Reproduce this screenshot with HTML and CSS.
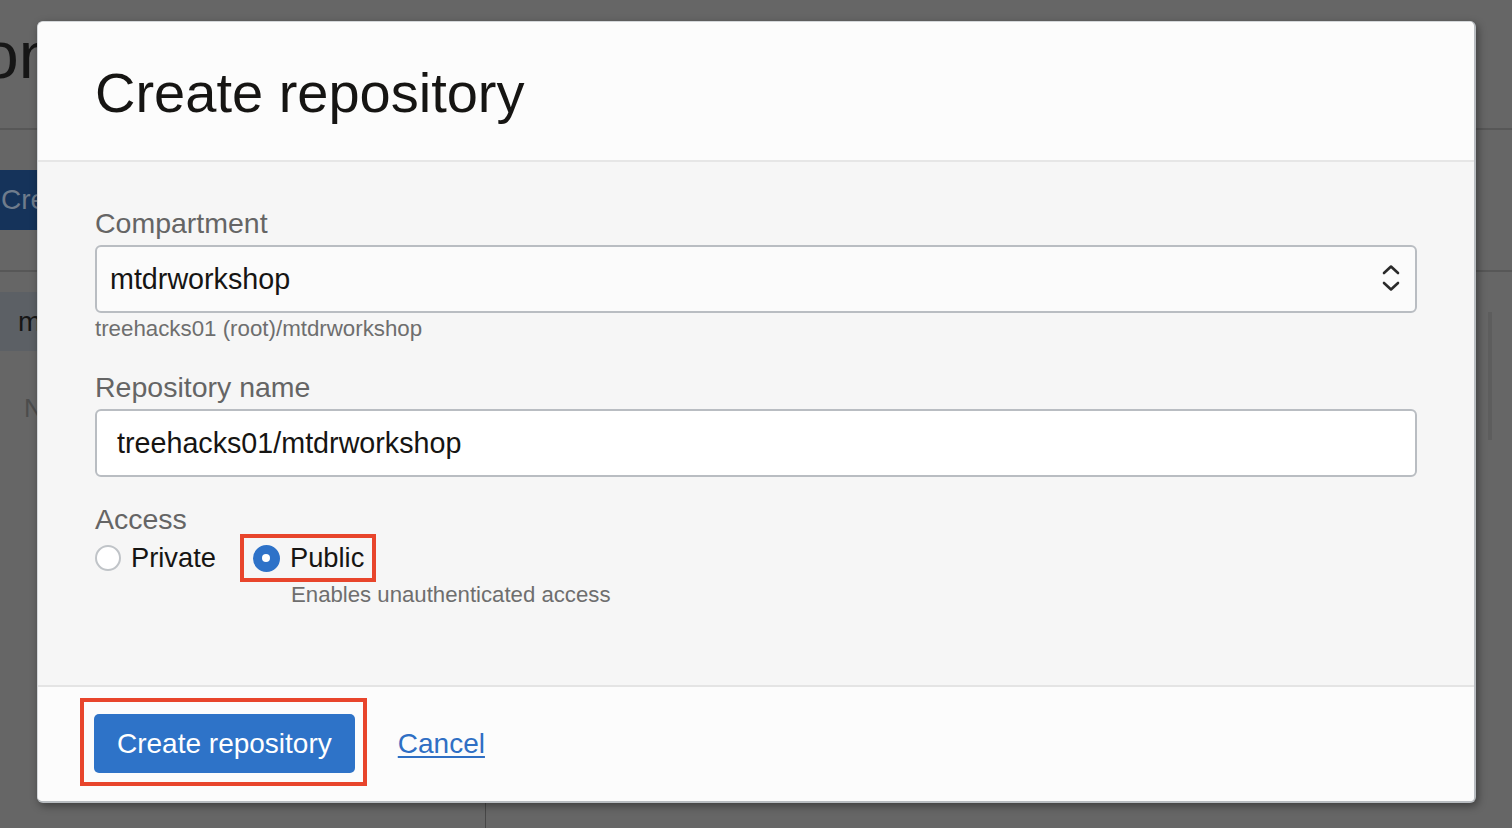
FILE: index.html
```html
<!DOCTYPE html>
<html lang="en">
<head>
<meta charset="utf-8">
<title>Create repository</title>
<link rel="stylesheet" href="styles.css">
</head>
<body>
<div class="page">
  <header class="page-head"><h1 class="page-title">on</h1></header>
  <div class="page-toolbar"><button class="page-btn" type="button">Cre</button></div>
  <div class="page-list">
    <div class="page-row">m</div>
    <div class="page-empty">N</div>
  </div>
  <div class="page-bottom"><div class="page-col"></div></div>
  <div class="page-scroll"></div>
</div>

<div class="modal" role="dialog" aria-labelledby="dlg-title">
  <div class="modal-header">
    <h2 class="modal-title" id="dlg-title">Create repository</h2>
  </div>
  <div class="modal-body">
    <div class="field">
      <label class="field-label">Compartment</label>
      <div class="select">
        <span class="value">mtdrworkshop</span>
        <svg class="chevrons" width="18" height="30" viewBox="0 0 18 30" aria-hidden="true">
          <path d="M2 9 L9 2.5 L16 9" fill="none" stroke="#2a2a2a" stroke-width="2.6" stroke-linecap="round" stroke-linejoin="round"/>
          <path d="M2 19 L9 25.5 L16 19" fill="none" stroke="#2a2a2a" stroke-width="2.6" stroke-linecap="round" stroke-linejoin="round"/>
        </svg>
      </div>
      <div class="helper">treehacks01 (root)/mtdrworkshop</div>
    </div>
    <div class="field">
      <label class="field-label">Repository name</label>
      <div class="input"><span class="value">treehacks01/mtdrworkshop</span></div>
    </div>
    <div class="field field-access">
      <label class="field-label access-label">Access</label>
      <div class="radio-group">
        <div class="radio-option">
          <span class="radio"></span>
          <span>Private</span>
        </div>
        <div class="radio-option public">
          <span class="radio checked"><span class="dot"></span></span>
          <span>Public</span>
        </div>
      </div>
      <div class="helper access-helper">Enables unauthenticated access</div>
    </div>
  </div>
  <div class="modal-footer">
    <div class="annot">
      <button class="btn-primary" type="button">Create repository</button>
    </div>
    <a class="cancel" href="#">Cancel</a>
  </div>
</div>
</body>
</html>
```

FILE: styles.css
```css
* {
  box-sizing: border-box;
}

html, body {
  margin: 0;
  padding: 0;
}

body {
  width: 1512px;
  height: 828px;
  overflow: hidden;
  position: relative;
  background: #666666;
  font-family: "Liberation Sans", Arial, Helvetica, sans-serif;
}

/* ---------- background page (dimmed) ---------- */
.page {
  height: 828px;
  display: flex;
  flex-direction: column;
}

.page-head {
  height: 130px;
  padding-top: 22px;
  border-bottom: 2px solid #575757;
  overflow: hidden;
}

.page-title {
  margin: 0 0 0 -18px;
  font-size: 66px;
  line-height: 66px;
  font-weight: 400;
  color: #161616;
  white-space: nowrap;
}

.page-toolbar {
  height: 142px;
  padding-top: 40px;
  border-bottom: 2px solid #575757;
}

.page-btn {
  display: block;
  width: 90px;
  height: 60px;
  border: none;
  border-radius: 0;
  background: #15335a;
  color: #6f7c8c;
  font-family: inherit;
  font-size: 28px;
  text-align: left;
  padding: 0 0 0 1px;
}

.page-list {
  flex: 1;
  padding-top: 20px;
}

.page-row {
  width: 420px;
  height: 59px;
  background: #5c6065;
  color: #161616;
  font-size: 28px;
  line-height: 59px;
  padding-left: 18px;
}

.page-empty {
  margin-top: 42px;
  padding-left: 24px;
  font-size: 26px;
  line-height: 30px;
  color: #4c4c4c;
}

.page-bottom {
  height: 25px;
}

.page-col {
  width: 486px;
  height: 100%;
  border-right: 1px solid #474747;
}

.page-scroll {
  position: absolute;
  top: 312px;
  right: 20px;
  width: 4px;
  height: 128px;
  background: #5d5d5d;
}

/* ---------- modal ---------- */
.modal {
  position: absolute;
  left: 37px;
  top: 21px;
  width: 1439px;
  height: 782px;
  display: flex;
  flex-direction: column;
  background: #fcfcfc;
  border: 1px solid #d4d7da;
  border-right: 2px solid #b8bcc0;
  border-bottom: 2px solid #b8bcc0;
  border-radius: 6px;
  overflow: hidden;
  box-shadow: 2px 3px 8px rgba(0, 0, 0, 0.4);
}

.modal-header {
  height: 140px;
  flex: none;
  padding: 39px 57px 0;
  background: #fcfcfc;
  border-bottom: 2px solid #e6e6e6;
}

.modal-title {
  margin: 0;
  font-size: 56px;
  line-height: 64px;
  font-weight: 400;
  color: #161513;
}

.modal-body {
  flex: 1;
  background: #f6f6f6;
  padding: 44px 57px 0;
}

.field + .field {
  margin-top: 28px;
}

.field.field-access {
  margin-top: 25px;
}

.field-label {
  display: block;
  font-size: 28.5px;
  line-height: 34px;
  color: #656565;
  margin-bottom: 5px;
}

.field-label.access-label {
  margin-bottom: 0;
}

.select,
.input {
  height: 68px;
  border: 2px solid #b9bdc2;
  border-radius: 6px;
  display: flex;
  align-items: center;
}

.select {
  background: #fbfbfb;
  justify-content: space-between;
  padding: 0 15px 0 13px;
}

.input {
  background: #ffffff;
  padding: 0 20px;
}

.value {
  font-size: 28.7px;
  color: #161513;
}

.chevrons {
  display: block;
}

.helper {
  font-size: 22.3px;
  line-height: 26px;
  color: #6e6e6e;
  margin-top: 3px;
}

.radio-group {
  height: 44px;
  display: flex;
  align-items: center;
}

.radio-option {
  display: flex;
  align-items: center;
  gap: 10px;
  font-size: 27.3px;
  color: #161513;
}

.radio-option.public {
  height: 40px;
  margin-left: 28px;
  padding: 0 8px 0 9px;
  outline: 4px solid #e8452c;
}

.radio {
  width: 26px;
  height: 26px;
  border-radius: 50%;
  border: 2px solid #c0c4c8;
  background: #ffffff;
  display: flex;
  align-items: center;
  justify-content: center;
}

.radio.checked {
  width: 27px;
  height: 27px;
  background: #2e72c8;
  border-color: #2e72c8;
}

.dot {
  width: 8px;
  height: 8px;
  border-radius: 50%;
  background: #ffffff;
}

.access-helper {
  margin-top: 2px;
  margin-left: 196px;
  font-size: 22.2px;
}

.modal-footer {
  height: 116px;
  flex: none;
  border-top: 2px solid #e4e4e4;
  background: #fcfcfc;
  display: flex;
  align-items: center;
  padding: 11px 0 15px 42px;
}

.annot {
  border: 4px solid #e8452c;
  padding: 12px 8px 9px 10px;
}

.btn-primary {
  display: block;
  height: 59px;
  padding: 0 23px;
  border: none;
  border-radius: 5px;
  background: #2e73c8;
  color: #ffffff;
  font-family: inherit;
  font-size: 28px;
}

.cancel {
  margin-left: 31px;
  margin-top: 4px;
  font-size: 28px;
  color: #2f6fc4;
  text-decoration: underline;
  text-underline-offset: 3px;
  text-decoration-thickness: 2px;
}
```
